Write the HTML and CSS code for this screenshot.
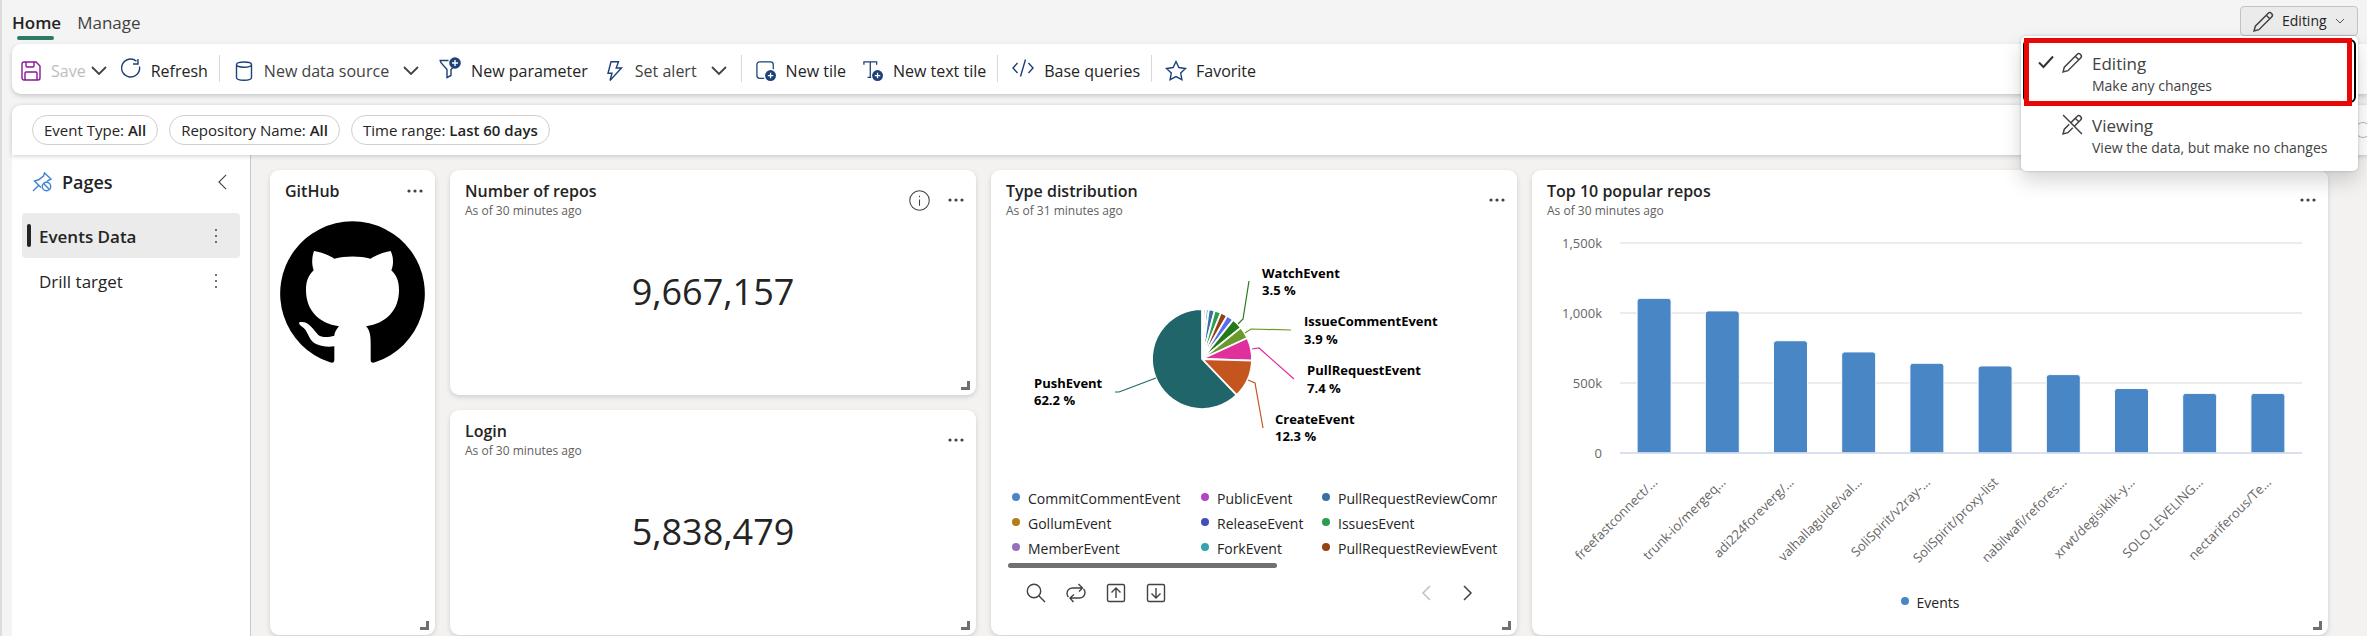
FILE: index.html
```html
<!DOCTYPE html>
<html lang="en">
<head>
<meta charset="utf-8">
<title>Events Data</title>
<link rel="stylesheet" href="styles.css">
</head>
<body>
<div class="app">
  <header class="top">
    <nav class="tabs">
      <button class="tab tab-active">Home</button>
      <button class="tab">Manage</button>
    </nav>
    <div class="mode">
      <button class="mode-button" aria-haspopup="menu" aria-expanded="true">
        <svg class="icon-pencil" viewBox="0 0 20 20"><path d="M1 19l1.2-4.6L14.3 2.300a2.400 2.400 0 0 1 3.400 3.400L5.600 17.800zM12.600 4l3.400 3.400"/></svg>
        <span>Editing</span>
        <svg class="icon-caret" viewBox="0 0 10 10"><path d="M1 3l4 4 4-4"/></svg>
      </button>
      <div class="menu" role="menu">
        <button class="menu-item menu-item-focus" role="menuitem">
          <svg class="icon-check" viewBox="0 0 16 14"><path d="M1 7.500l4.500 4.500L15 1.500"/></svg>
          <svg class="icon-pencil" viewBox="0 0 20 20"><path d="M1 19l1.2-4.6L14.3 2.300a2.400 2.400 0 0 1 3.400 3.400L5.600 17.800zM12.600 4l3.400 3.400"/></svg>
          <span class="menu-text"><span class="menu-title">Editing</span><span class="menu-note">Make any changes</span></span>
        </button>
        <button class="menu-item" role="menuitem">
          <span class="icon-check"></span>
          <svg class="icon-pencil" viewBox="0 0 20 20"><path d="M8.500 8.200L14.300 2.300a2.400 2.400 0 0 1 3.400 3.400L11.800 11.600M10.300 13.100L5.600 17.800 1 19l1.200-4.600L6.900 9.700M12.600 4l3.400 3.400M1 1l18 18"/></svg>
          <span class="menu-text"><span class="menu-title">Viewing</span><span class="menu-note">View the data, but make no changes</span></span>
        </button>
        <div class="callout"></div>
      </div>
    </div>
  </header>

  <div class="toolbar" role="toolbar">
    <button class="tool tool-save" disabled>
      <svg class="icon purple" viewBox="0 0 20 20"><path d="M1 3a2 2 0 0 1 2-2h12l4 4v12a2 2 0 0 1-2 2H3a2 2 0 0 1-2-2zM5 1v4a1 1 0 0 0 1 1h6a1 1 0 0 0 1-1V1M4 19v-7a1 1 0 0 1 1-1h10a1 1 0 0 1 1 1v7"/></svg>
      <span>Save</span>
    </button>
    <button class="tool-arrow" aria-label="Save options"><svg class="icon-chevron" viewBox="0 0 16 10"><path d="M1 1l7 7 7-7"/></svg></button>
    <button class="tool">
      <svg class="icon raised" viewBox="0 0 20 20"><path d="M18.500 8.500A9 9 0 1 1 15.500 3.200M17 1v5h-5"/></svg>
      <span>Refresh</span>
    </button>
    <span class="divider"></span>
    <button class="tool muted">
      <svg class="icon" viewBox="0 0 20 20"><path d="M2.500 3.500C2.500 2 5.800 1 10 1s7.500 1 7.500 2.500S14.200 6.200 10 6.200 2.500 5 2.500 3.500zM2.500 3.500v13C2.500 18 5.800 19.200 10 19.200s7.500-1.200 7.500-2.700v-13"/></svg>
      <span>New data source</span>
      <svg class="icon-chevron" viewBox="0 0 16 10"><path d="M1 1l7 7 7-7"/></svg>
    </button>
    <button class="tool">
      <svg class="icon icon-wide raised" viewBox="0 0 22 22"><path d="M9.500 3.500H1.200l.6 2L8 12.500V20.500l4-2v-6l2-2"/><circle class="badge" cx="16" cy="6" r="5.800"/><path class="plus" d="M16 3v6M13 6h6"/></svg>
      <span>New parameter</span>
    </button>
    <button class="tool muted">
      <svg class="icon" viewBox="0 0 20 20"><path d="M6 .800h7.500L11.200 7H16.500L5 19.500l2-7.300H3z"/></svg>
      <span>Set alert</span>
      <svg class="icon-chevron" viewBox="0 0 16 10"><path d="M1 1l7 7 7-7"/></svg>
    </button>
    <span class="divider"></span>
    <button class="tool">
      <svg class="icon" viewBox="0 0 22 22"><path d="M19 9V4a3 3 0 0 0-3-3H4a3 3 0 0 0-3 3v12a3 3 0 0 0 3 3h5"/><circle class="badge" cx="16" cy="16" r="6"/><path class="plus" d="M16 13v6M13 16h6"/></svg>
      <span>New tile</span>
    </button>
    <button class="tool">
      <svg class="icon" viewBox="0 0 22 22"><path d="M1 4V1h14v3M8 1v17M5 18h4"/><circle class="badge" cx="16" cy="16" r="6"/><path class="plus" d="M16 13v6M13 16h6"/></svg>
      <span>New text tile</span>
    </button>
    <span class="divider"></span>
    <button class="tool">
      <svg class="icon icon-wide raised" viewBox="0 0 22 20"><path d="M5.500 5L1 10l4.500 5M16.500 5L21 10l-4.500 5M13.500 1.500l-5 17"/></svg>
      <span>Base queries</span>
    </button>
    <span class="divider"></span>
    <button class="tool">
      <svg class="icon" viewBox="1 1 20 20"><path d="M11 1.500l2.900 6 6.600 1-4.800 4.600 1.200 6.600L11 16.600l-5.900 3.100 1.200-6.600L1.500 8.500l6.600-1z"/></svg>
      <span>Favorite</span>
    </button>
  </div>

  <div class="filters">
    <button class="pill">Event Type: <b>All</b></button>
    <button class="pill">Repository Name: <b>All</b></button>
    <button class="pill">Time range: <b>Last 60 days</b></button>
    <span class="reset"></span>
  </div>

  <div class="body">
    <aside class="pages">
      <div class="pages-head">
        <svg class="icon-pin" viewBox="0 0 20 20"><path d="M1 19l6-6M9 15.500L2.500 9l4.500-1.500 4.500-3.500 1-3 6.500 6-3 1.500-1 1"/><circle cx="14.500" cy="14.500" r="4.200"/><path d="M11.600 11.600l5.800 5.800"/></svg>
        <h2 class="pages-title">Pages</h2>
        <button class="plain" aria-label="Collapse pages"><svg class="icon-collapse" viewBox="0 0 10 16"><path d="M9 0L1 8l8 8"/></svg></button>
      </div>
      <div class="page page-active"><a class="page-link" href="#events">Events Data</a><button class="plain" aria-label="Page menu"><svg class="icon-more-v" viewBox="0 0 4 16"><circle cx="2" cy="2" r="1"/><circle cx="2" cy="8" r="1"/><circle cx="2" cy="14" r="1"/></svg></button></div>
      <div class="page"><a class="page-link" href="#drill">Drill target</a><button class="plain" aria-label="Page menu"><svg class="icon-more-v" viewBox="0 0 4 16"><circle cx="2" cy="2" r="1"/><circle cx="2" cy="8" r="1"/><circle cx="2" cy="14" r="1"/></svg></button></div>
    </aside>

    <main class="grid">
      <section class="tile tile-tall">
        <div class="tile-head">
          <h3 class="tile-title">GitHub</h3>
          <button class="plain" aria-label="More"><svg class="icon-more" viewBox="0 0 16 4"><circle cx="2" cy="2" r="1.600"/><circle cx="8" cy="2" r="1.600"/><circle cx="14" cy="2" r="1.600"/></svg></button>
        </div>
        <svg class="mark" viewBox="840 214 435 426"><path d="M990 638A217 217 0 1 1 1125 638Q1112 642 1112 630V580C1112 555 1108 540 1098 530 1160 522 1197 480 1197 422 1197 395 1190 378 1174 362 1182 342 1180 320 1172 304 1155 306 1130 315 1112 327 1080 318 1035 318 1003 327 985 315 960 306 942 304 936 320 934 342 941 362 925 378 918 395 918 422 918 480 955 522 1017 530 1008 540 1003 550 1003 558 985 564 965 564 955 556 940 540 925 512 898 518 895 526 906 528 914 538 926 552 928 575 950 584 965 591 985 592 1003 590V630Q1003 642 990 638z"/></svg>
        <span class="grip"></span>
      </section>

      <section class="tile">
        <div class="tile-head">
          <div><h3 class="tile-title">Number of repos</h3><p class="tile-note">As of 30 minutes ago</p></div>
          <div class="tile-actions">
            <button class="plain" aria-label="Information"><svg class="icon-info" viewBox="0 0 20 20"><circle cx="10" cy="10" r="9.300"/><path d="M10 9v6M10 5.500v1.500"/></svg></button>
            <button class="plain" aria-label="More"><svg class="icon-more" viewBox="0 0 16 4"><circle cx="2" cy="2" r="1.600"/><circle cx="8" cy="2" r="1.600"/><circle cx="14" cy="2" r="1.600"/></svg></button>
          </div>
        </div>
        <div class="stat">9,667,157</div>
        <span class="grip"></span>
      </section>

      <section class="tile tile-tall">
        <div class="tile-head">
          <div><h3 class="tile-title">Type distribution</h3><p class="tile-note">As of 31 minutes ago</p></div>
          <button class="plain" aria-label="More"><svg class="icon-more" viewBox="0 0 16 4"><circle cx="2" cy="2" r="1.600"/><circle cx="8" cy="2" r="1.600"/><circle cx="14" cy="2" r="1.600"/></svg></button>
        </div>
        <svg class="chart" viewBox="0 0 526 256">
          <g class="slices" id="slices"></g>
          <g class="leaders">
            <path stroke="#237b18" d="M247 94L252 89 258 51"/>
            <path stroke="#6b9a2c" d="M254 103L260 99 300 100"/>
            <path stroke="#e0309b" d="M261 119L268 118 303 149"/>
            <path stroke="#c4551f" d="M257 150L264 153 272 198"/>
            <path stroke="#1f6569" d="M165 148L128 162H124"/>
          </g>
          <g class="slice-labels">
            <text x="271" y="48">WatchEvent<tspan x="271" y="65">3.5 %</tspan></text>
            <text x="313" y="96">IssueCommentEvent<tspan x="313" y="114">3.9 %</tspan></text>
            <text x="316" y="145">PullRequestEvent<tspan x="316" y="163">7.4 %</tspan></text>
            <text x="284" y="194">CreateEvent<tspan x="284" y="211">12.3 %</tspan></text>
            <text x="43" y="158">PushEvent<tspan x="43" y="175">62.2 %</tspan></text>
          </g>
        </svg>
        <div class="legend">
          <ul class="legend-list">
            <li class="key c-blue">CommitCommentEvent</li>
            <li class="key c-gold">GollumEvent</li>
            <li class="key c-lilac">MemberEvent</li>
            <li class="key c-magenta">PublicEvent</li>
            <li class="key c-indigo">ReleaseEvent</li>
            <li class="key c-teal">ForkEvent</li>
            <li class="key c-steel">PullRequestReviewComm</li>
            <li class="key c-green">IssuesEvent</li>
            <li class="key c-brown">PullRequestReviewEvent</li>
          </ul>
          <div class="scroll-track"><div class="scroll-thumb"></div></div>
        </div>
        <div class="chart-tools">
          <button class="plain" aria-label="Search"><svg class="icon-small" viewBox="0 0 20 20"><circle cx="8" cy="8" r="6.700"/><path d="M12.800 12.800L19 19"/></svg></button>
          <button class="plain" aria-label="Swap"><svg class="icon-small" viewBox="0 0 20 20"><path d="M2.500 14A5 5 0 0 1 1 10.500a5.500 5.500 0 0 1 5.500-5.500H16M12.500 1L16.500 5 13 8.500M17.500 6A5 5 0 0 1 19 9.500a5.500 5.500 0 0 1-5.500 5.500H4.500M8 11.500L4 15l3.500 4"/></svg></button>
          <button class="plain" aria-label="Move up"><svg class="icon-small" viewBox="0 0 20 20"><rect x="1.500" y="1.500" width="17" height="17" rx="1.500"/><path d="M10 15V5.500M5.500 9.500L10 5l4.500 4.500"/></svg></button>
          <button class="plain" aria-label="Move down"><svg class="icon-small" viewBox="0 0 20 20"><rect x="1.500" y="1.500" width="17" height="17" rx="1.500"/><path d="M10 5v9.500M5.500 10.500L10 15l4.500-4.500"/></svg></button>
          <button class="plain nav-prev" aria-label="Previous"><svg class="icon-nav" viewBox="0 0 10 16"><path d="M9 1L2 8l7 7"/></svg></button>
          <button class="plain" aria-label="Next"><svg class="icon-nav" viewBox="0 0 10 16"><path d="M1 1l7 7-7 7"/></svg></button>
        </div>
        <span class="grip"></span>
      </section>

      <section class="tile tile-tall">
        <div class="tile-head">
          <div><h3 class="tile-title">Top 10 popular repos</h3><p class="tile-note">As of 30 minutes ago</p></div>
          <button class="plain" aria-label="More"><svg class="icon-more" viewBox="0 0 16 4"><circle cx="2" cy="2" r="1.600"/><circle cx="8" cy="2" r="1.600"/><circle cx="14" cy="2" r="1.600"/></svg></button>
        </div>
        <svg class="chart" viewBox="0 0 796 360">
          <path class="gridlines" d="M88 13H770M88 83H770M88 153H770"/>
          <g class="y-labels">
            <text x="70" y="18">1,500k</text><text x="70" y="88">1,000k</text><text x="70" y="158">500k</text><text x="70" y="228">0</text>
          </g>
          <g class="bars" id="bars"></g>
          <path class="baseline" d="M88 223H770"/>
          <g class="x-labels" id="x-labels"></g>
        </svg>
        <ul class="bar-legend"><li class="key c-blue">Events</li></ul>
        <span class="grip"></span>
      </section>

      <section class="tile">
        <div class="tile-head">
          <div><h3 class="tile-title">Login</h3><p class="tile-note">As of 30 minutes ago</p></div>
          <button class="plain" aria-label="More"><svg class="icon-more" viewBox="0 0 16 4"><circle cx="2" cy="2" r="1.600"/><circle cx="8" cy="2" r="1.600"/><circle cx="14" cy="2" r="1.600"/></svg></button>
        </div>
        <div class="stat">5,838,479</div>
        <span class="grip"></span>
      </section>
    </main>
  </div>
</div>
<script src="script.js"></script>
</body>
</html>
```

FILE: styles.css
```css
* { box-sizing: border-box; }
body {
  margin: 0;
  background: #f4f4f4;
  color: #242424;
  font-family: "Open Sans", "Noto Sans", sans-serif;
  font-size: 17px;
  line-height: 24px;
}
button {
  border: 0;
  padding: 0;
  background: none;
  font: inherit;
  color: inherit;
  text-align: left;
}
h2, h3, p, ul { margin: 0; padding: 0; list-style: none; }
svg {
  display: block;
  flex: none;
  fill: none;
  stroke: currentColor;
  overflow: visible;
}
.app {
  display: flex;
  flex-direction: column;
  min-height: 100vh;
  padding-left: 10px;
  border-left: 2px solid #dcdcdc;
  overflow: hidden;
}

/* Tabs and mode switch */
.top {
  position: relative;
  z-index: 3;
  display: flex;
  justify-content: space-between;
  height: 44px;
  padding-right: 9px;
}
.tabs { display: flex; gap: 16px; }
.tab {
  position: relative;
  height: 40px;
  padding-top: 6px;
  color: #424242;
}
.tab-active { font-weight: 600; color: #242424; }
.tab-active::after {
  content: "";
  position: absolute;
  left: 5px;
  right: 7px;
  bottom: 0;
  height: 4px;
  border-radius: 2px;
  background: #2a7a66;
}
.mode { position: relative; padding-top: 6px; }
.mode-button {
  display: flex;
  align-items: center;
  width: 118px;
  height: 30px;
  padding: 0 12px;
  gap: 8px;
  border: 1px solid #c2c2c2;
  border-radius: 4px;
  background: #ebebeb;
  font-size: 14px;
}
.icon-pencil { width: 21px; height: 21px; color: #424242; stroke-width: 1.4; }
.icon-caret { width: 10px; height: 10px; color: #555; }
.icon-check { width: 16px; height: 14px; margin-top: 3px; stroke-width: 2; color: #333; flex: none; }
.menu {
  position: absolute;
  z-index: 5;
  top: 36px;
  right: 0;
  width: 337px;
  padding: 4px 3px 7px;
  border-radius: 5px;
  background: #fff;
  box-shadow: 0 10px 20px rgba(0, 0, 0, .16), 0 0 3px rgba(0, 0, 0, .2);
}
.menu-item {
  display: flex;
  gap: 8px;
  width: 100%;
  height: 62px;
  padding: 12px 14px 0;
  color: #424242;
  border-radius: 5px;
}
.menu-item-focus { outline: 2px solid #000; outline-offset: -1px; }
.menu-text { display: flex; flex-direction: column; padding-left: 1px; }
.menu-title { line-height: 24px; }
.menu-note { font-size: 14px; line-height: 20px; }
.callout {
  position: absolute;
  top: 2px;
  left: 3px;
  right: 6px;
  height: 68px;
  border: 5px solid #e80808;
}

/* Command bar */
.toolbar {
  display: flex;
  align-items: center;
  height: 50px;
  padding: 3px 0 0 9px;
  border-radius: 9px 0 0 9px;
  background: #fff;
  box-shadow: 0 2px 5px rgba(0, 0, 0, .18);
  font-size: 16px;
  white-space: nowrap;
}
.tool { display: flex; align-items: center; gap: 10px; margin-right: 17px; }
.tool-save { margin-right: 5px; color: #bdbdbd; }
.tool-arrow { margin-right: 14px; }
.muted { margin-right: 20px; color: #424242; }
.muted .icon-chevron { margin-left: 4px; }
.icon { width: 20px; height: 20px; color: #1c4279; stroke-width: 1.4; }
.icon-wide { width: 22px; height: 22px; }
.purple { color: #881798; }
.raised { margin-bottom: 6px; }
.icon-chevron { width: 16px; height: 10px; color: #424242; stroke-width: 1.8; }
.badge { fill: #1c4279; stroke: none; }
.plus { stroke: #fff; }
.divider {
  width: 1px;
  height: 27px;
  margin: 0 14px 4px -6px;
  background: #d9d9d9;
}

/* Filters */
.filters {
  position: relative;
  z-index: 2;
  display: flex;
  align-items: center;
  gap: 11px;
  height: 50px;
  margin-top: 11px;
  padding-left: 20px;
  border-radius: 9px 0 0 0;
  background: #fff;
  box-shadow: 0 1px 5px rgba(0, 0, 0, .2);
}
.pill {
  height: 30px;
  padding: 0 11px;
  border: 1px solid #cfcfcf;
  border-radius: 15px;
  font-size: 15px;
  white-space: nowrap;
}
.pill b { font-weight: 600; }
.reset {
  width: 16px;
  height: 16px;
  margin-left: auto;
  margin-right: -4px;
  border: 1px solid #b5b5b5;
  border-radius: 8px;
}

/* Pages pane */
.body { display: flex; flex: 1; background: #f3f2f1; }
.pages {
  width: 239px;
  flex: none;
  padding: 14px 10px 0;
  border-right: 1px solid #c8c8c8;
  background: #fff;
}
.pages-head {
  display: flex;
  align-items: center;
  gap: 10px;
  height: 26px;
  margin-bottom: 18px;
  padding: 0 13px 0 10px;
}
.icon-pin { width: 20px; height: 20px; color: #3f82d4; stroke-width: 1.4; }
.pages-title { flex: 1; font-size: 18px; font-weight: 600; line-height: 26px; }
.icon-collapse { width: 9px; height: 16px; color: #424242; stroke-width: 1.2; }
.plain { display: block; flex: none; color: #424242; }
.page {
  position: relative;
  display: flex;
  align-items: center;
  height: 45px;
  padding: 0 22px 0 17px;
  border-radius: 4px;
}
.page-link { flex: 1; padding-top: 2px; color: inherit; text-decoration: none; }
.page-active { background: #ebebeb; font-weight: 600; }
.page-active::before {
  content: "";
  position: absolute;
  left: 5px;
  top: 11px;
  width: 4px;
  height: 23px;
  border-radius: 2px;
  background: #242424;
}
.icon-more-v { width: 4px; height: 16px; fill: currentColor; stroke: none; }

/* Tiles */
.grid {
  flex: 1;
  display: grid;
  grid-template-columns: 165fr 526fr 526fr 796fr;
  grid-template-rows: 225px 225px;
  gap: 15px;
  padding: 15px 39px 0 19px;
}
.tile {
  position: relative;
  display: flex;
  flex-direction: column;
  min-width: 0;
  border-radius: 9px;
  background: #fff;
  box-shadow: 0 2px 5px rgba(0, 0, 0, .15);
}
.tile-tall { grid-row: span 2; }
.tile-head {
  display: flex;
  justify-content: space-between;
  align-items: center;
  padding: 10px 12px 0 15px;
}
.tile-actions { display: flex; align-items: center; gap: 18px; }
.tile-title { font-size: 16px; font-weight: 600; line-height: 22px; }
.tile-note { font-size: 12px; line-height: 18px; color: #616161; }
.icon-more { width: 16px; height: 4px; fill: currentColor; stroke: none; }
.icon-info { width: 21px; height: 21px; }
.mark { width: 145px; margin: 19px auto 0; fill: #000; stroke: none; }
.stat {
  flex: 1;
  padding-top: 47px;
  font-size: 36px;
  line-height: 50px;
  text-align: center;
}
.grip {
  position: absolute;
  right: 6px;
  bottom: 5px;
  width: 9px;
  height: 9px;
  border: solid #707070;
  border-width: 0 3px 3px 0;
}

/* Charts */
.chart { width: 100%; margin-top: 10px; }
.chart text { stroke: none; }
.slices path { stroke: #fff; stroke-width: 1.8; stroke-linejoin: round; }
.slice-labels { fill: #000; font-size: 13px; font-weight: 700; }
.leaders { stroke-width: 1.2; }
.gridlines { stroke: #e6e6e6; stroke-width: 1.5; }
.baseline { stroke: #ccd6eb; stroke-width: 1.5; }
.bars { fill: #4986c5; stroke: #fff; stroke-width: 1; }
.y-labels, .x-labels { fill: #666; font-size: 13px; text-anchor: end; }
.legend { padding: 0 20px 0 17px; }
.legend-list {
  display: grid;
  grid-template: repeat(3, 25px) / 189px 121px 1fr;
  grid-auto-flow: column;
}
.key {
  position: relative;
  padding-left: 20px;
  font-size: 14px;
  line-height: 25px;
  white-space: nowrap;
}
.key::before {
  content: "";
  position: absolute;
  left: 4px;
  top: 7px;
  width: 8px;
  height: 8px;
  border-radius: 4px;
  background: var(--dot);
}
.c-blue { --dot: #4986c5; }
.c-gold { --dot: #b37d14; }
.c-lilac { --dot: #9770bd; }
.c-magenta { --dot: #b146c2; }
.c-indigo { --dot: #4450b8; }
.c-teal { --dot: #34a3ad; }
.c-steel { --dot: #3a6ea5; overflow: hidden; }
.c-green { --dot: #2a9d4f; }
.c-brown { --dot: #964013; }
.scroll-track { margin-top: 2px; }
.scroll-thumb { width: 55%; height: 5px; border-radius: 3px; background: #707070; }
.chart-tools {
  display: flex;
  align-items: center;
  gap: 20px;
  padding: 15px 44px 0 35px;
}
.icon-small { width: 20px; height: 20px; stroke-width: 1.4; }
.icon-nav { width: 10px; height: 16px; stroke-width: 1.5; }
.nav-prev { margin-left: auto; margin-right: 12px; color: #c0c0c0; }
.bar-legend { display: flex; justify-content: center; margin-right: 4px; }
```

FILE: script.js
```js
const SVG = "http://www.w3.org/2000/svg";

function add(parent, name, attributes, text) {
  const node = document.createElementNS(SVG, name);
  for (const key in attributes) node.setAttribute(key, attributes[key]);
  if (text) node.textContent = text;
  parent.appendChild(node);
}

// Slices as [end of slice in percent, colour], clockwise from the top.
const slices = [
  [0.6, "#ffffff"], [1.3, "#9770bd"], [2.2, "#34a3ad"], [4.1, "#3a6ea5"],
  [6.2, "#2a9d4f"], [8.4, "#964013"], [10.7, "#5c6cf0"], [14.2, "#237b18"],
  [18.1, "#6b9a2c"], [25.5, "#e0309b"], [37.8, "#c4551f"], [100, "#1f6569"]
];
const cx = 211, cy = 129, r = 50;
const point = p => {
  const a = p / 50 * Math.PI;
  return (cx + r * Math.sin(a)).toFixed(2) + " " + (cy - r * Math.cos(a)).toFixed(2);
};
let from = 0;
for (const [to, fill] of slices) {
  const large = to - from > 50 ? 1 : 0;
  add(document.getElementById("slices"), "path",
    { fill, d: `M${cx} ${cy}L${point(from)}A${r} ${r} 0 ${large} 1 ${point(to)}z` });
  from = to;
}

// Repositories with the number of events in thousands.
const repos = [
  ["freefastconnect/...", 1105], ["trunk-io/mergeq...", 1015], ["adi224foreverg/...", 802],
  ["valhallaguide/val...", 722], ["SoliSpirit/v2ray-...", 641], ["SoliSpirit/proxy-list", 622],
  ["nabilwafi/refores...", 560], ["xrwt/degisiklik-y...", 461], ["SOLO-LEVELING...", 426],
  ["nectariferous/Te...", 426]
];
repos.forEach(([name, value], i) => {
  const mid = 88 + 68.2 * (i + 0.5);
  const left = mid - 17, right = mid + 17, top = 223 - value * 0.14;
  add(document.getElementById("bars"), "path",
    { d: `M${left} 223V${top + 3}q0-3 3-3H${right - 3}q3 0 3 3V223z` });
  const x = mid + 4, y = 253;
  add(document.getElementById("x-labels"), "text",
    { x, y, transform: `rotate(-45 ${x} ${y})` }, name);
});
```
